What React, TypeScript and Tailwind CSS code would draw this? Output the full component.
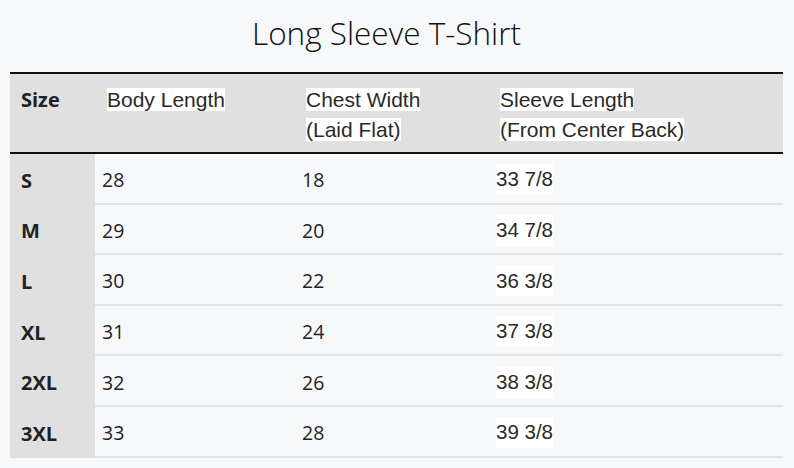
const rows = [
  { size: "S", body: "28", chest: "18", sleeve: "33 7/8" },
  { size: "M", body: "29", chest: "20", sleeve: "34 7/8" },
  { size: "L", body: "30", chest: "22", sleeve: "36 3/8" },
  { size: "XL", body: "31", chest: "24", sleeve: "37 3/8" },
  { size: "2XL", body: "32", chest: "26", sleeve: "38 3/8" },
  { size: "3XL", body: "33", chest: "28", sleeve: "39 3/8" },
];

export default function App() {
  return (
    <main className="h-[468px] w-[794px] overflow-hidden bg-[#f7f8fa] text-[#1f2226] font-['Open_Sans',sans-serif]">
      <h1 className="pr-[21px] pt-[15px] text-center text-[31.5px] leading-[36px] font-light text-[#111]">Long Sleeve T-Shirt</h1>

      <div className="ml-[10px] mt-[21px] w-[773px] border-t-2 border-[#111]">
        {/* header */}
        <div className="flex h-[80px] border-b-2 border-[#111] bg-[#e0e0e0]">
          <div className="w-[85px] pl-[11px] pt-[11px] text-[20px] font-bold leading-[30px]">Size</div>
          <div className="w-[200px] pl-[12px] pt-[11px] font-['Liberation_Sans',Arial,sans-serif] text-[21px] leading-[30px] text-[#2a2a2a]">
            <span className="bg-white">Body Length</span>
          </div>
          <div className="w-[194px] pl-[11px] pt-[11px] font-['Liberation_Sans',Arial,sans-serif] text-[21px] leading-[30px] text-[#2a2a2a]">
            <span className="bg-white">Chest Width</span>
            <br />
            <span className="bg-white">(Laid Flat)</span>
          </div>
          <div className="flex-1 pl-[11px] pt-[11px] font-['Liberation_Sans',Arial,sans-serif] text-[21px] leading-[30px] text-[#2a2a2a]">
            <span className="bg-white">Sleeve Length</span>
            <br />
            <span className="bg-white">(From Center Back)</span>
          </div>
        </div>

        {/* body rows */}
        {rows.map((r) => (
          <div key={r.size} className="flex h-[50.6px]">
            <div className="flex w-[85px] items-center bg-[#e0e0e0] pl-[11px] pt-[3px] text-[20px] font-bold">{r.size}</div>
            <div className="flex flex-1 border-b-2 border-[#e1e3e6]">
              <div className="flex w-[200px] items-center pl-[7px] pt-[3px] text-[19.5px]">{r.body}</div>
              <div className="flex w-[194px] items-center pl-[7px] pt-[3px] text-[19.5px]">{r.chest}</div>
              <div className="flex flex-1 items-center pl-[7px] pt-[3px] font-['Liberation_Sans',Arial,sans-serif] text-[20.5px] text-[#2a2a2a]">
                <span className="bg-white">{r.sleeve}</span>
              </div>
            </div>
          </div>
        ))}
      </div>
    </main>
  );
}
